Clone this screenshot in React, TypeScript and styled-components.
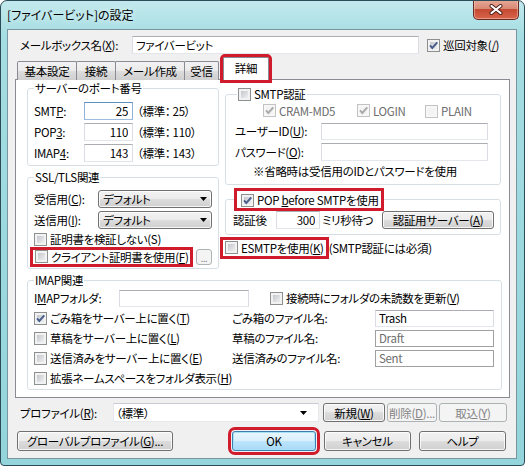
import styled, { createGlobalStyle, css } from 'styled-components';

const RED = '#cf1b2b';

const GlobalStyle = createGlobalStyle`
  html, body { margin: 0; padding: 0; background: #fff; }
  body {
    font-family: "Noto Sans CJK JP", "Noto Sans", sans-serif;
    font-size: 11.5px;
    letter-spacing: -0.3px;
    font-feature-settings: "palt";
    text-autospace: no-autospace;
    color: #000;
  }
  * { box-sizing: border-box; }
  u { text-underline-offset: 1px; }
`;

const Window = styled.div`
  width: 525px;
  height: 466px;
  display: flex;
  flex-direction: column;
  border: 1px solid #2c4b58;
  border-radius: 7px 7px 4px 4px;
  background: linear-gradient(180deg, #c2e9ed 0px, #a4dde2 36px, #93d5db 100%);
  padding: 0 7px 6px 6px;
  overflow: hidden;
`;

const TitleBar = styled.div`
  flex: none;
  height: 28px;
  display: flex;
  align-items: flex-start;
`;

const Title = styled.span`
  margin-top: 6px;
  font-size: 12px;
  letter-spacing: 0;
  line-height: 16px;
  text-shadow: 0 0 6px rgba(255, 255, 255, 0.9);
`;

const CloseButton = styled.div`
  margin: -1px -2px 0 auto;
  width: 46px;
  height: 20px;
  display: flex;
  align-items: center;
  justify-content: center;
  border: 1px solid #6a2a20;
  border-top: none;
  border-radius: 0 0 5px 5px;
  background: linear-gradient(180deg, #e8a898 0%, #d88a76 45%, #c54a33 50%, #d8644a 100%);
  box-shadow: inset 0 0 0 1px rgba(255, 220, 210, 0.45);
`;

const Client = styled.div`
  flex: 1;
  display: flex;
  flex-direction: column;
  background: #f0f0f0;
  border: 1px solid #7895a0;
  padding-top: 6px;
`;

const Row = styled.div<{ $h?: number; $mt?: number; $ml?: number }>`
  display: flex;
  align-items: center;
  height: ${p => p.$h ?? 18}px;
  margin-top: ${p => p.$mt ?? 0}px;
  margin-left: ${p => p.$ml ?? 0}px;
  flex: none;
`;

const Label = styled.span<{ $w?: number; $off?: boolean }>`
  ${p => p.$w !== undefined && css`width: ${p.$w}px;`}
  flex: none;
  line-height: 14px;
  white-space: nowrap;
  color: ${p => (p.$off ? '#6d6d6d' : '#000')};
`;

const TextBox = styled.input<{ $w: number; $h?: number; $right?: boolean; $dim?: boolean; $focus?: boolean }>`
  width: ${p => p.$w}px;
  height: ${p => p.$h ?? 18}px;
  flex: none;
  margin: 0;
  padding: 0 ${p => (p.$right ? 4 : 3)}px 0 3px;
  font: inherit;
  letter-spacing: inherit;
  line-height: 14px;
  text-align: ${p => (p.$right ? 'right' : 'left')};
  background: #fff;
  color: ${p => (p.$dim ? '#6d6d6d' : '#000')};
  border: 1px solid;
  border-color: ${p =>
    p.$focus ? '#5d8fc0 #8fb3d8 #9dbde0 #8fb3d8' : p.$dim ? '#a0a0a0' : '#abadb3 #dadde3 #e3e6ea #dadde3'};
  outline: none;
`;

const Box = styled.span<{ $off?: boolean }>`
  width: 13px;
  height: 13px;
  flex: none;
  display: inline-flex;
  align-items: center;
  justify-content: center;
  border: 1px solid ${p => (p.$off ? '#c3c3c3' : '#8e8f8f')};
  background: ${p => (p.$off ? '#f3f3f3' : 'linear-gradient(135deg, #b8bcc3 0%, #e6e7e9 70%, #f2f2f2 100%)')};
  box-shadow: inset 0 0 0 2px ${p => (p.$off ? '#f7f7f7' : '#f2f2f2')};
`;

const CheckLabel = styled.label<{ $off?: boolean }>`
  display: inline-flex;
  align-items: center;
  gap: 3px;
  flex: none;
  line-height: 14px;
  white-space: nowrap;
  color: ${p => (p.$off ? '#6d6d6d' : '#000')};
`;

function Check(props: { checked?: boolean; off?: boolean; children?: React.ReactNode }) {
  return (
    <CheckLabel $off={props.off}>
      <Box $off={props.off}>
        {props.checked && (
          <svg width="11" height="11" viewBox="0 0 11 11">
            <path
              d="M2 5.4 L4.3 8 L9.3 2.3"
              fill="none"
              stroke={props.off ? '#a9a9a9' : '#4a5e8d'}
              strokeWidth="1.9"
            />
          </svg>
        )}
      </Box>
      <span>{props.children}</span>
    </CheckLabel>
  );
}

const RedMark = styled.span<{ $pad?: string; $ml?: number }>`
  display: inline-flex;
  align-items: center;
  flex: none;
  padding: ${p => p.$pad ?? '0 2px'};
  margin-left: ${p => p.$ml ?? 0}px;
  outline: 3px solid ${RED};
`;

const PushButton = styled.button<{ $w: number; $h?: number; $off?: boolean; $default?: boolean }>`
  width: ${p => p.$w}px;
  height: ${p => p.$h ?? 20}px;
  flex: none;
  margin: 0;
  padding: 0;
  font: inherit;
  letter-spacing: inherit;
  line-height: 14px;
  color: #000;
  border: 1px solid #707070;
  border-radius: 3px;
  background: linear-gradient(180deg, #f2f2f2 0%, #ebebeb 49%, #dddddd 50%, #cfcfcf 100%);
  box-shadow: inset 0 0 0 1px rgba(255, 255, 255, 0.8);
  white-space: nowrap;
  ${p =>
    p.$off &&
    css`
      color: #838383;
      border-color: #adb2b5;
      background: #f4f4f4;
      box-shadow: none;
    `}
  ${p =>
    p.$default &&
    css`
      border-color: #3c7fb1;
      background: linear-gradient(180deg, #eaf6fd 0%, #d9f0fc 49%, #bee6fd 50%, #a7d9f5 100%);
      box-shadow: inset 0 0 0 1px #a8e2f8;
      outline: 3px solid ${RED};
      outline-offset: 1px;
    `}
`;

const DropList = styled.div<{ $w: number }>`
  width: ${p => p.$w}px;
  height: 18px;
  flex: none;
  display: flex;
  align-items: center;
  justify-content: space-between;
  padding: 0 4px 0 4px;
  border: 1px solid #707070;
  border-radius: 3px;
  background: linear-gradient(180deg, #f2f2f2 0%, #ebebeb 49%, #dddddd 50%, #cfcfcf 100%);
  box-shadow: inset 0 0 0 1px rgba(255, 255, 255, 0.8);
  line-height: 14px;
`;

const ComboBox = styled.div<{ $w: number }>`
  width: ${p => p.$w}px;
  height: 19px;
  flex: none;
  display: flex;
  align-items: center;
  justify-content: space-between;
  padding: 0 11px 0 2px;
  background: #fff;
  border: 1px solid;
  border-color: #c9ccd2 #e6e8eb #e6e8eb #e6e8eb;
  line-height: 14px;
`;

function Arrow() {
  return (
    <svg width="7" height="4" viewBox="0 0 7 4">
      <path d="M0 0 H7 L3.5 4 Z" fill="#000" />
    </svg>
  );
}

const TabStrip = styled.div`
  flex: none;
  display: flex;
  align-items: flex-end;
  height: 23px;
  margin: 3px 0 -1px 9px;
  position: relative;
  z-index: 1;
`;

const Tab = styled.div<{ $w: number; $active?: boolean }>`
  width: ${p => p.$w}px;
  height: 19px;
  margin-right: -1px;
  display: flex;
  align-items: center;
  justify-content: center;
  line-height: 14px;
  border: 1px solid #898c95;
  border-bottom: none;
  border-radius: 2px 2px 0 0;
  background: linear-gradient(180deg, #f2f2f2 0%, #ebebeb 49%, #dddddd 50%, #cfcfcf 100%);
  ${p =>
    p.$active &&
    css`
      height: 23px;
      margin-left: 5px;
      background: #fff;
      padding-bottom: 2px;
      outline: 3px solid ${RED};
    `}
`;

const Panel = styled.div`
  flex: none;
  margin-left: 7px;
  width: 495px;
  height: 319px;
  background: #fff;
  border: 1px solid #898c95;
  padding: 1px 7px 0 11px;
`;

const Columns = styled.div`
  display: flex;
  gap: 6px;
  height: 190px;
`;

const Column = styled.div<{ $w: number; $mt?: number }>`
  width: ${p => p.$w}px;
  margin-top: ${p => p.$mt ?? 0}px;
  display: flex;
  flex-direction: column;
`;

const Group = styled.fieldset<{ $pad: string; $mt?: number; $w?: number }>`
  margin: ${p => p.$mt ?? 0}px 0 0 0;
  ${p => p.$w !== undefined && css`width: ${p.$w}px;`}
  min-width: 0;
  border: 1px solid #d5dfe5;
  border-radius: 3px;
  padding: ${p => p.$pad};
`;

const Legend = styled.legend<{ $ml?: number; $h?: number }>`
  margin-left: ${p => p.$ml ?? 0}px;
  padding: 0 1px;
  height: ${p => p.$h ?? 14}px;
  line-height: 14px;
  display: flex;
  align-items: center;
`;

const SmallButton = styled.div`
  width: 16px;
  height: 16px;
  margin-left: auto;
  display: flex;
  align-items: flex-end;
  justify-content: center;
  padding-bottom: 1px;
  font-size: 9px;
  line-height: 9px;
  color: #838383;
  border: 1px solid #adb2b5;
  border-radius: 3px;
  background: #f4f4f4;
`;

const ImapGrid = styled.div`
  display: grid;
  grid-template-columns: 198px 143px 119px;
  grid-auto-rows: 20px;
  align-items: center;
  margin-top: 1px;
`;

const Note = styled.div`
  margin: 3px 0 0 18px;
  height: 14px;
  line-height: 14px;
  white-space: nowrap;
`;

export default function App() {
  return (
    <>
      <GlobalStyle />
      <Window>
        <TitleBar>
          <Title>[ファイバービット]の設定</Title>
          <CloseButton>
            <svg width="14" height="11" viewBox="0 0 14 11">
              <path d="M2.5 2 L11.5 9 M11.5 2 L2.5 9" stroke="#4a1a12" strokeWidth="4" strokeLinecap="round" />
              <path d="M2.5 2 L11.5 9 M11.5 2 L2.5 9" stroke="#fff" strokeWidth="2.2" strokeLinecap="round" />
            </svg>
          </CloseButton>
        </TitleBar>

        <Client>
          <Row $ml={12}>
            <Label $w={112}>
              メールボックス名(<u>X</u>):
            </Label>
            <TextBox $w={287} readOnly defaultValue="ファイバービット" />
            <Row $ml={8}>
              <Check checked>
                巡回対象(<u>/</u>)
              </Check>
            </Row>
          </Row>

          <TabStrip>
            <Tab $w={60}>基本設定</Tab>
            <Tab $w={40}>接続</Tab>
            <Tab $w={70}>メール作成</Tab>
            <Tab $w={35}>受信</Tab>
            <Tab $w={46} $active>
              詳細
            </Tab>
          </TabStrip>

          <Panel>
            <Columns>
              <Column $w={192}>
                <Group $pad="7px 6px 3px 6px">
                  <Legend>サーバーのポート番号</Legend>
                  <Row>
                    <Label $w={50}>
                      SMT<u>P</u>:
                    </Label>
                    <TextBox $w={49} $right $focus readOnly defaultValue="25" />
                    <Label style={{ marginLeft: 4 }}>（標準： 25）</Label>
                  </Row>
                  <Row $mt={3}>
                    <Label $w={50}>
                      POP<u>3</u>:
                    </Label>
                    <TextBox $w={49} $right readOnly defaultValue="110" />
                    <Label style={{ marginLeft: 4 }}>（標準： 110）</Label>
                  </Row>
                  <Row $mt={3}>
                    <Label $w={50}>
                      IMAP<u>4</u>:
                    </Label>
                    <TextBox $w={49} $right readOnly defaultValue="143" />
                    <Label style={{ marginLeft: 4 }}>（標準： 143）</Label>
                  </Row>
                </Group>

                <Group $pad="6px 6px 3px 6px" $mt={4}>
                  <Legend>SSL/TLS関連</Legend>
                  <Row>
                    <Label $w={64}>
                      受信用(<u>C</u>):
                    </Label>
                    <DropList $w={114}>
                      デフォルト
                      <Arrow />
                    </DropList>
                  </Row>
                  <Row $mt={3}>
                    <Label $w={64}>
                      送信用(<u>I</u>):
                    </Label>
                    <DropList $w={114}>
                      デフォルト
                      <Arrow />
                    </DropList>
                  </Row>
                  <Row $h={16} $mt={2}>
                    <Check>証明書を検証しない(S)</Check>
                  </Row>
                  <Row $h={17} $mt={1}>
                    <RedMark $ml={-1}>
                      <Check>
                        クライアント証明書を使用(<u>F</u>)
                      </Check>
                    </RedMark>
                    <SmallButton>...</SmallButton>
                  </Row>
                </Group>
              </Column>

              <Column $w={276} $mt={6}>
                <Group $pad="3px 9px 6px 9px">
                  <Legend $ml={2}>
                    <Check>SMTP認証</Check>
                  </Legend>
                  <Row $h={14} $ml={28}>
                    <span style={{ width: 94 }}>
                      <Check checked off>
                        CRAM-MD5
                      </Check>
                    </span>
                    <span style={{ width: 68 }}>
                      <Check checked off>
                        LOGIN
                      </Check>
                    </span>
                    <Check off>PLAIN</Check>
                  </Row>
                  <Row $mt={4}>
                    <Label $w={86}>
                      ユーザーID(<u>U</u>):
                    </Label>
                    <TextBox $w={167} $h={17} readOnly defaultValue="" />
                  </Row>
                  <Row $mt={3}>
                    <Label $w={86}>
                      パスワード(<u>O</u>):
                    </Label>
                    <TextBox $w={167} readOnly defaultValue="" />
                  </Row>
                  <Note>※省略時は受信用のIDとパスワードを使用</Note>
                </Group>

                <Group $pad="3px 6px 5px 7px" $mt={6}>
                  <Legend $ml={3} $h={17}>
                    <RedMark $pad="2px 2px 1px 4px">
                      <Check checked>
                        POP <u>b</u>efore SMTPを使用
                      </Check>
                    </RedMark>
                  </Legend>
                  <Row>
                    <Label $w={43}>認証後</Label>
                    <TextBox $w={44} $right readOnly defaultValue="300" />
                    <Label style={{ marginLeft: 2 }}>ミリ秒待つ</Label>
                    <PushButton $w={112} $h={18} style={{ marginLeft: 'auto' }} type="button">
                      認証用サーバー(<u>A</u>)
                    </PushButton>
                  </Row>
                </Group>

                <Row $h={15} $mt={5}>
                  <RedMark $ml={-2} $pad="1px 2px 1px 2px">
                    <Check>
                      ESMTPを使用(<u>K</u>)
                    </Check>
                  </RedMark>
                  <Label style={{ marginLeft: 3 }}>(SMTP認証には必須)</Label>
                </Row>
              </Column>
            </Columns>

            <Group $pad="2px 7px 1px 6px" $mt={2} $w={475}>
              <Legend>IMAP関連</Legend>
              <Row>
                <Label $w={85}>
                  I<u>M</u>APフォルダ:
                </Label>
                <TextBox $w={130} $h={17} readOnly defaultValue="" />
                <Row $ml={21}>
                  <Check>
                    接続時にフォルダの未読数を更新(<u>V</u>)
                  </Check>
                </Row>
              </Row>
              <ImapGrid>
                <Check checked>
                  ごみ箱をサーバー上に置く(<u>T</u>)
                </Check>
                <Label>ごみ箱のファイル名:</Label>
                <TextBox $w={119} $h={17} readOnly defaultValue="Trash" />
                <Check>
                  草稿をサーバー上に置く(<u>L</u>)
                </Check>
                <Label>草稿のファイル名:</Label>
                <TextBox $w={119} $h={17} $dim readOnly defaultValue="Draft" />
                <Check>
                  送信済みをサーバー上に置く(<u>E</u>)
                </Check>
                <Label>送信済みのファイル名:</Label>
                <TextBox $w={119} $h={17} $dim readOnly defaultValue="Sent" />
                <Check>
                  拡張ネームスペースをフォルダ表示(<u>H</u>)
                </Check>
              </ImapGrid>
            </Group>
          </Panel>

          <Row $h={19} $mt={5} $ml={12}>
            <Label $w={93}>
              プロファイル(<u>R</u>):
            </Label>
            <ComboBox $w={206}>
              （標準）
              <Arrow />
            </ComboBox>
            <PushButton $w={62} $h={19} style={{ marginLeft: 4 }} type="button">
              新規(<u>W</u>)
            </PushButton>
            <PushButton $w={50} $h={19} $off style={{ marginLeft: 2 }} type="button">
              削除(<u>D</u>)...
            </PushButton>
            <PushButton $w={68} $h={19} $off style={{ marginLeft: 2 }} type="button">
              取込(<u>Y</u>)
            </PushButton>
          </Row>

          <Row $h={20} $mt={9} $ml={9}>
            <PushButton $w={156} type="button">
              グローバルプロファイル(<u>G</u>)...
            </PushButton>
            <PushButton $w={84} $default style={{ marginLeft: 59 }} type="button">
              OK
            </PushButton>
            <PushButton $w={87} style={{ marginLeft: 8 }} type="button">
              キャンセル
            </PushButton>
            <PushButton $w={87} style={{ marginLeft: 8 }} type="button">
              ヘルプ
            </PushButton>
          </Row>
        </Client>
      </Window>
    </>
  );
}
